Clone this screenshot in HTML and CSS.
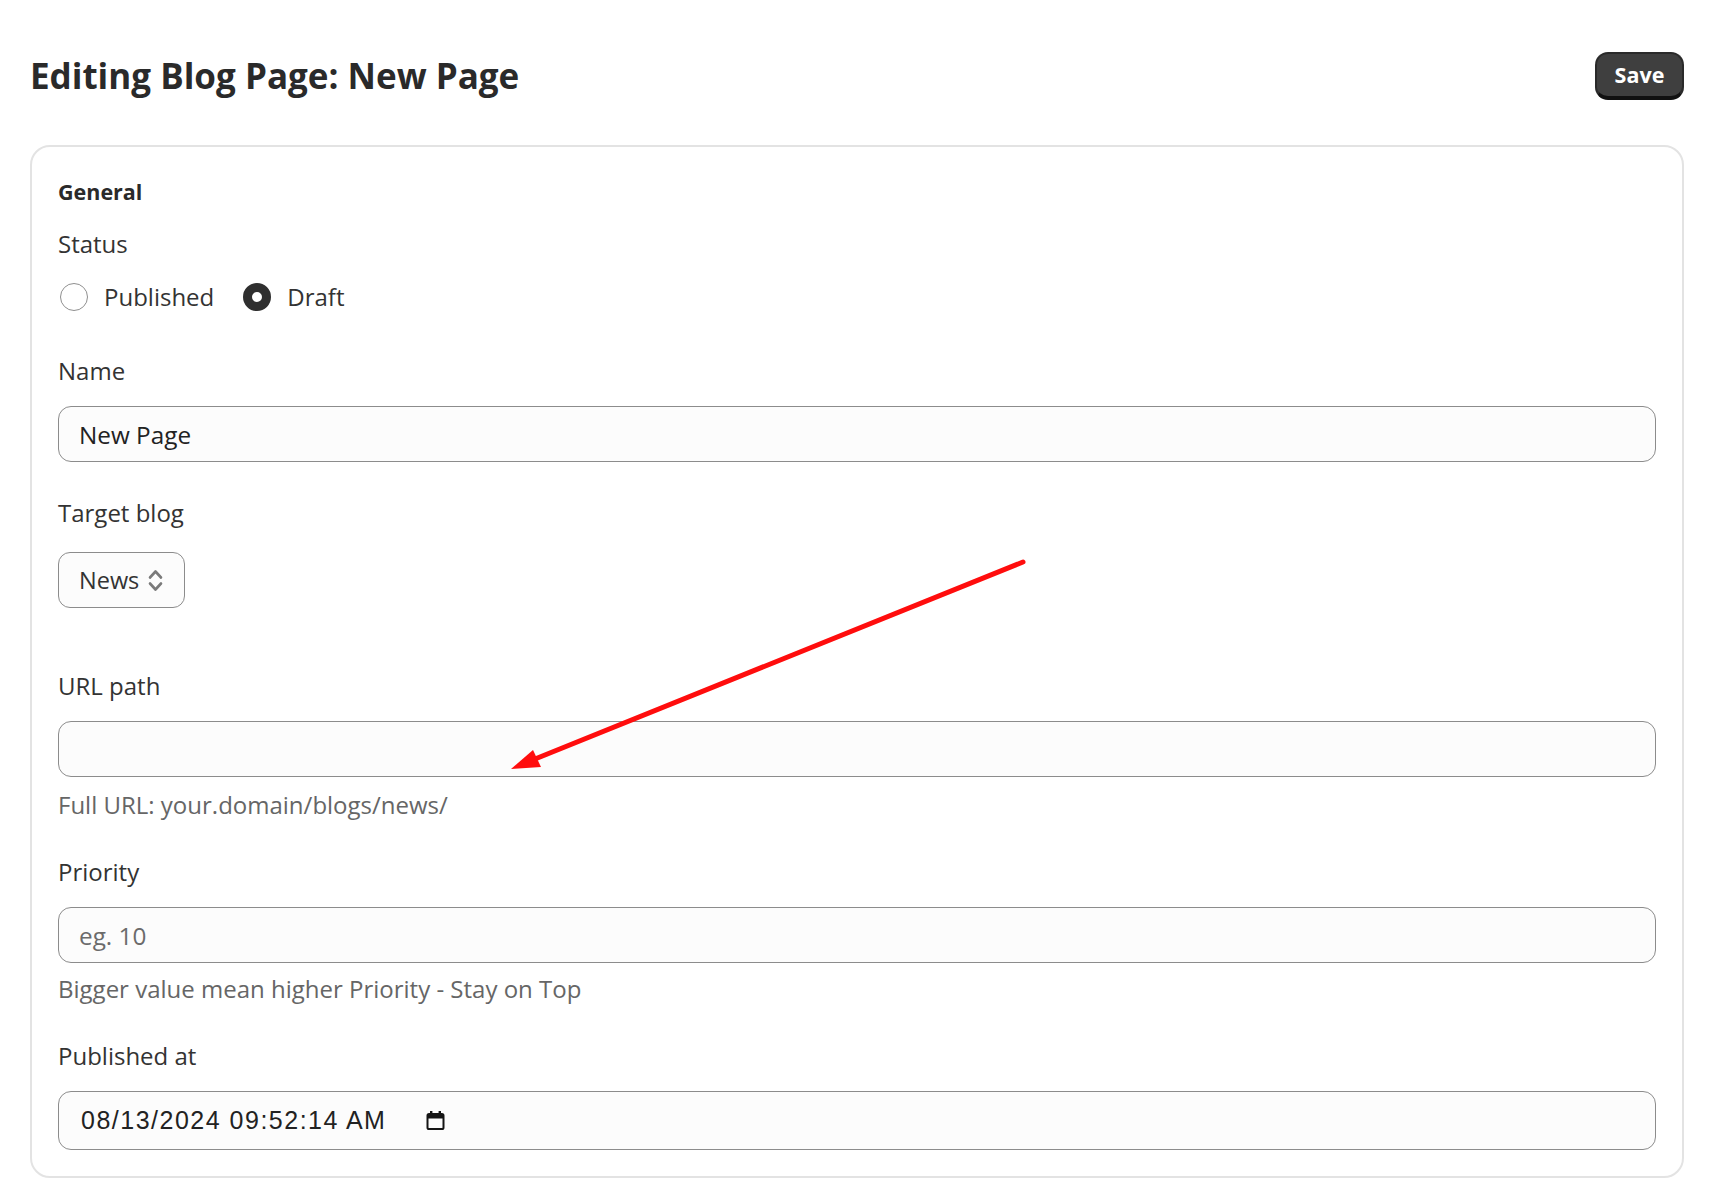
FILE: index.html
```html
<!DOCTYPE html>
<html lang="en">
<head>
<meta charset="utf-8">
<title>Editing Blog Page: New Page</title>
<link rel="stylesheet" href="styles.css">
</head>
<body>
<div class="page">
  <header class="header">
    <h1 class="title">Editing Blog Page: New Page</h1>
    <button class="btn-save" type="button">Save</button>
  </header>

  <section class="card">
    <h2 class="section-title">General</h2>

    <div class="field field-status">
      <span class="label">Status</span>
      <div class="radio-row">
        <label class="radio-opt"><input type="radio" name="status" class="radio"><span>Published</span></label>
        <label class="radio-opt"><input type="radio" name="status" class="radio" checked><span>Draft</span></label>
      </div>
    </div>

    <div class="field">
      <label class="label">Name</label>
      <input class="input" type="text" value="New Page">
    </div>

    <div class="field field-select">
      <label class="label label-select">Target blog</label>
      <div class="select">
        <span>News</span>
        <svg class="chev" width="15" height="25" viewBox="0 0 15 25" aria-hidden="true">
          <path d="M2 9.5 L7.5 3.5 L13 9.5" fill="none" stroke="#7a7a7a" stroke-width="2.6" stroke-linecap="round" stroke-linejoin="round"/>
          <path d="M2 15.5 L7.5 21.5 L13 15.5" fill="none" stroke="#7a7a7a" stroke-width="2.6" stroke-linecap="round" stroke-linejoin="round"/>
        </svg>
      </div>
    </div>

    <div class="field">
      <label class="label">URL path</label>
      <input class="input" type="text" value="">
      <p class="help help-url">Full URL: your.domain/blogs/news/</p>
    </div>

    <div class="field">
      <label class="label">Priority</label>
      <input class="input" type="text" placeholder="eg. 10">
      <p class="help help-prio">Bigger value mean higher Priority - Stay on Top</p>
    </div>

    <div class="field field-last">
      <label class="label">Published at</label>
      <div class="input date">
        <span class="date-text">08/13/2024 09:52:14 AM</span>
        <svg class="cal" width="19" height="19" viewBox="0 0 19 19" aria-hidden="true">
          <rect x="4" y="0" width="2.4" height="4" fill="#151515"/>
          <rect x="12.6" y="0" width="2.4" height="4" fill="#151515"/>
          <rect x="1.5" y="3" width="16" height="15" rx="1.6" fill="none" stroke="#151515" stroke-width="2"/>
          <rect x="1.5" y="3" width="16" height="4.5" fill="#151515"/>
        </svg>
      </div>
    </div>
  </section>
</div>

<svg class="annot" width="1727" height="1183" viewBox="0 0 1727 1183" aria-hidden="true">
  <line x1="1023" y1="562" x2="535" y2="759" stroke="#ff0d0d" stroke-width="5" stroke-linecap="round"/>
  <polygon points="511,769 533,750 541,767" fill="#ff0d0d"/>
</svg>
</body>
</html>
```

FILE: styles.css
```css
* { box-sizing: border-box; }

html, body {
  margin: 0;
  padding: 0;
  background: #ffffff;
}

body {
  position: relative;
  font-family: "Open Sans", "Noto Sans", sans-serif;
  color: #2e2e2e;
  width: 1727px;
  min-height: 1183px;
  overflow: hidden;
}

.page {
  width: 1654px;
  margin-left: 30px;
}

.header {
  display: flex;
  align-items: center;
  justify-content: space-between;
  padding-top: 52px;
  margin-bottom: 45px;
}

.title {
  margin: 0;
  font-size: 35px;
  line-height: 48px;
  font-weight: 700;
  color: #2a2a2a;
}

.btn-save {
  width: 89px;
  height: 48px;
  border-radius: 13px;
  background: #3f3f3f;
  border: 2px solid #2a2a2a;
  border-bottom-width: 4px;
  border-bottom-color: #111;
  color: #ffffff;
  font-family: "Open Sans", sans-serif;
  font-weight: 700;
  font-size: 21.5px;
  line-height: 1;
  padding: 0;
}

.card {
  border: 2px solid #e3e3e3;
  border-radius: 20px;
  padding: 31px 26px 26px;
}

.section-title {
  margin: 0 0 22px;
  font-size: 21.5px;
  line-height: 28px;
  font-weight: 700;
  color: #2a2a2a;
}

.label {
  display: block;
  font-size: 24px;
  line-height: 32px;
  color: #333;
  margin-bottom: 19px;
}

.field { margin-bottom: 35px; }
.field-status { margin-bottom: 42px; }
.field-status .label { margin-bottom: 21px; }
.field-select { margin-bottom: 62px; }
.label-select { margin-bottom: 23px; }
.field-last { margin-bottom: 0; }

.radio-row {
  display: flex;
  align-items: center;
  height: 32px;
  gap: 29px;
  padding-left: 2px;
}

.radio-opt {
  display: flex;
  align-items: center;
  gap: 16px;
  font-size: 24px;
  line-height: 32px;
  color: #333;
}

.radio {
  appearance: none;
  -webkit-appearance: none;
  margin: 0;
  width: 28px;
  height: 28px;
  border-radius: 50%;
  border: 1px solid #8f8f8f;
  background: #fff;
}

.radio:checked {
  border: 9px solid #2f2f2f;
}

.input {
  display: block;
  width: 100%;
  height: 56px;
  border: 1.5px solid #8c8c8c;
  border-radius: 13px;
  background: #fcfcfc;
  padding: 0 20px;
  font-family: "Open Sans", sans-serif;
  font-size: 24.3px;
  color: #222;
  outline: none;
}

.input::placeholder { color: #6b6b6b; }

.select {
  display: inline-flex;
  align-items: center;
  gap: 9px;
  width: 127px;
  height: 56px;
  border: 1.5px solid #8c8c8c;
  border-radius: 12px;
  background: #fcfcfc;
  padding-left: 20px;
  font-size: 23.5px;
  color: #333;
}

.chev { display: block; }

.help {
  margin: 12px 0 0;
  font-size: 24px;
  line-height: 32px;
  color: #666;
}

.help-prio { margin-top: 10px; }

.date {
  display: flex;
  align-items: center;
  height: 59px;
  padding-left: 22px;
}

.date-text {
  font-family: "Liberation Sans", Arial, sans-serif;
  font-size: 25px;
  letter-spacing: 1.5px;
  color: #222;
}

.cal {
  display: block;
  margin-left: 40px;
}

.annot {
  position: absolute;
  top: 0;
  left: 0;
  pointer-events: none;
}
```
